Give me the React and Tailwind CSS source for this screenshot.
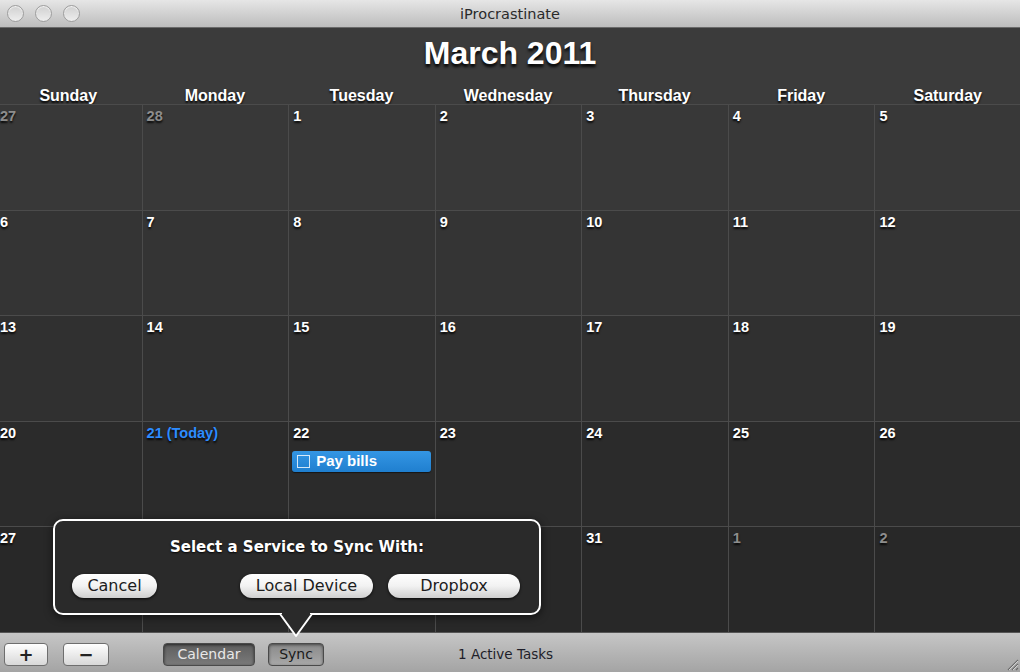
import React from 'react';

const ui = { fontFamily: '"DejaVu Sans", "Liberation Sans", sans-serif' };
const helv = { fontFamily: '"Liberation Sans", Arial, sans-serif' };

const days = ['Sunday', 'Monday', 'Tuesday', 'Wednesday', 'Thursday', 'Friday', 'Saturday'];

// cells under the sync popover stay blank, as in the screenshot
const weeks = [
  [{ d: '27', dim: true }, { d: '28', dim: true }, { d: '1' }, { d: '2' }, { d: '3' }, { d: '4' }, { d: '5' }],
  [{ d: '6' }, { d: '7' }, { d: '8' }, { d: '9' }, { d: '10' }, { d: '11' }, { d: '12' }],
  [{ d: '13' }, { d: '14' }, { d: '15' }, { d: '16' }, { d: '17' }, { d: '18' }, { d: '19' }],
  [{ d: '20' }, { d: '21 (Today)', today: true }, { d: '22', event: 'Pay bills' }, { d: '23' }, { d: '24' }, { d: '25' }, { d: '26' }],
  [{ d: '27' }, { d: '' }, { d: '' }, { d: '' }, { d: '31' }, { d: '1', dim: true }, { d: '2', dim: true }],
];

const rowBg = ['bg-[#383838]', 'bg-[#343434]', 'bg-[#303030]', 'bg-[#2b2b2b]', 'bg-[#282828]'];

function Light() {
  return (
    <div className="h-[17px] w-[17px] rounded-full border border-[#9d9d9d] bg-gradient-to-b from-[#d0d0d0] to-[#eeeeee] shadow-[inset_0_1px_1px_rgba(255,255,255,0.8)]" />
  );
}

function DayCell({ cell, bg }) {
  const color = cell.today ? 'text-[#2d8cff]' : cell.dim ? 'text-[#8d8d8d]' : 'text-white';
  return (
    <div className={`border-l border-t border-[#4b4b4b] ${bg} px-[4px] pt-[3px]`}>
      <div
        className={`h-[17px] text-[14.5px] font-bold leading-[17px] ${color} [text-shadow:0_2px_2px_rgba(0,0,0,0.85)]`}
        style={helv}
      >
        {cell.d}
      </div>
      {cell.event && (
        <div className="mt-[9px] -ml-[1px] flex h-[21px] items-center gap-[6px] rounded-[3px] bg-gradient-to-b from-[#3496e4] to-[#1f7fcf] pl-[5px] shadow-[0_1px_1px_rgba(0,0,0,0.5)]">
          <div className="h-[13px] w-[13px] border border-white/80" />
          <span className="text-[15px] font-bold text-white" style={helv}>
            {cell.event}
          </span>
        </div>
      )}
    </div>
  );
}

function PillButton({ children, className }) {
  return (
    <div
      className={`flex h-[24px] items-center justify-center rounded-full bg-gradient-to-b from-white via-[#f2f2f2] to-[#cfcfcf] text-[16px] text-[#1c1c1c] shadow-[0_1px_3px_rgba(0,0,0,0.8)] ${className}`}
      style={ui}
    >
      {children}
    </div>
  );
}

export default function App() {
  return (
    <div className="relative h-[672px] w-[1020px] overflow-hidden bg-[#3b3b3b]" style={ui}>
      {/* Title bar */}
      <div className="relative flex h-[28px] items-center border-b border-[#6a6a6a] bg-gradient-to-b from-[#e6e6e6] to-[#bdbdbd]">
        <div className="flex gap-[11px] pl-[7px]">
          <Light />
          <Light />
          <Light />
        </div>
        <div className="absolute inset-x-0 top-[4px] text-center text-[14.5px] text-[#2a2a2a]">iProcrastinate</div>
      </div>

      {/* Month header */}
      <div className="h-[76px] bg-[#3b3b3b]">
        <div
          className="pt-[7px] text-center text-[32px] font-bold leading-[36px] text-white [text-shadow:0_3px_3px_rgba(0,0,0,0.9)]"
          style={helv}
        >
          March 2011
        </div>
        <div className="-ml-[5px] mt-[16px] grid w-[1026px] grid-cols-7">
          {days.map((d) => (
            <div
              key={d}
              className="text-center text-[16px] font-bold leading-[18px] text-white [text-shadow:0_2px_2px_rgba(0,0,0,0.9)]"
              style={helv}
            >
              {d}
            </div>
          ))}
        </div>
      </div>

      {/* Grid */}
      <div className="-ml-[5px] grid h-[528px] w-[1026px] grid-cols-7 grid-rows-5">
        {weeks.map((w, ri) =>
          w.map((c, ci) => <DayCell key={`${ri}-${ci}`} cell={c} bg={rowBg[ri]} />)
        )}
      </div>

      {/* Bottom bar */}
      <div className="relative flex h-[40px] items-center border-t border-[#555] bg-gradient-to-b from-[#c6c6c6] to-[#a4a4a4] pl-[4px] pt-[4px]">
        <div className="flex h-[23px] w-[44px] items-center justify-center rounded-[4px] border border-[#6e6e6e] bg-gradient-to-b from-white to-[#d8d8d8] text-[18px] font-bold leading-none text-[#222]">
          +
        </div>
        <div className="ml-[15px] flex h-[23px] w-[46px] items-center justify-center rounded-[4px] border border-[#6e6e6e] bg-gradient-to-b from-white to-[#d8d8d8] text-[18px] font-bold leading-none text-[#222]">
          −
        </div>
        <div className="ml-[54px] flex h-[23px] w-[92px] items-center justify-center rounded-[4px] border border-[#4a4a4a] bg-gradient-to-b from-[#5e5e5e] to-[#7a7a7a] text-[14px] text-[#e8e8e8] shadow-[inset_0_1px_3px_rgba(0,0,0,0.6)]">
          Calendar
        </div>
        <div className="ml-[13px] flex h-[23px] w-[56px] items-center justify-center rounded-[4px] border border-[#4a4a4a] bg-gradient-to-b from-[#8a8a8a] to-[#a8a8a8] text-[14px] text-[#1a1a1a] shadow-[inset_0_1px_3px_rgba(0,0,0,0.5)]">
          Sync
        </div>
        <div className="ml-[134px] text-[13.5px] text-[#1e1e2a]">1 Active Tasks</div>
        <svg className="absolute bottom-[1px] right-[1px]" width="14" height="14" viewBox="0 0 14 14">
          <path d="M13 3 L3 13 M13 7 L7 13 M13 11 L11 13" stroke="#6a6a6a" strokeWidth="1.2" />
          <path d="M13 4 L4 13 M13 8 L8 13" stroke="#e0e0e0" strokeWidth="0.8" />
        </svg>
      </div>

      {/* Sync popover */}
      <div className="absolute left-[53px] top-[519px] h-[96px] w-[488px] rounded-[10px] border-2 border-white bg-[#2a2a2a] shadow-[0_2px_8px_rgba(0,0,0,0.6)]">
        <div className="pt-[17px] text-center text-[15px] font-bold leading-[18px] text-white [text-shadow:0_1px_2px_rgba(0,0,0,0.9)]">
          Select a Service to Sync With:
        </div>
        <div className="mt-[18px] flex justify-between pl-[17px] pr-[19px]">
          <PillButton className="w-[85px]">Cancel</PillButton>
          <div className="flex gap-[15px]">
            <PillButton className="w-[133px]">Local Device</PillButton>
            <PillButton className="w-[132px]">Dropbox</PillButton>
          </div>
        </div>
      </div>
      <svg className="absolute left-[279px] top-[612px]" width="34" height="26" viewBox="0 0 34 26">
        <path d="M1 2 L17 24 L33 2" fill="#2a2a2a" stroke="white" strokeWidth="2" strokeLinejoin="round" />
        <rect x="3" y="0" width="28" height="3" fill="#2a2a2a" />
      </svg>
    </div>
  );
}
